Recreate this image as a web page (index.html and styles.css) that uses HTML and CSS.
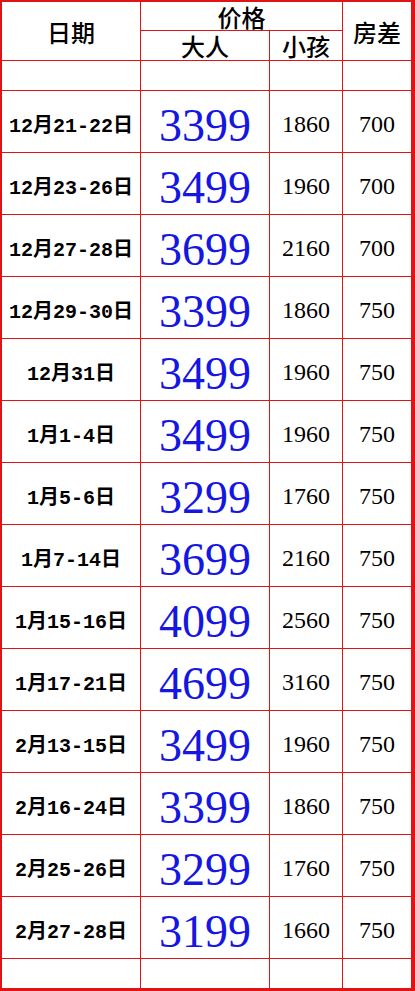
FILE: index.html
```html
<!DOCTYPE html>
<html lang="zh-CN">
<head>
<meta charset="utf-8">
<title>价格表</title>
<link rel="stylesheet" href="styles.css">
</head>
<body>
<div class="sheet">
  <div class="cell head tall">日期</div>
  <div class="cell head wide">价格</div>
  <div class="cell head tall last">房差</div>
  <div class="cell head sub">大人</div>
  <div class="cell head sub">小孩</div>

  <div class="cell"></div><div class="cell"></div><div class="cell"></div><div class="cell last"></div>

  <div class="cell date">12月21-22日</div><div class="cell big">3399</div><div class="cell num">1860</div><div class="cell num last">700</div>
  <div class="cell date">12月23-26日</div><div class="cell big">3499</div><div class="cell num">1960</div><div class="cell num last">700</div>
  <div class="cell date">12月27-28日</div><div class="cell big">3699</div><div class="cell num">2160</div><div class="cell num last">700</div>
  <div class="cell date">12月29-30日</div><div class="cell big">3399</div><div class="cell num">1860</div><div class="cell num last">750</div>
  <div class="cell date">12月31日</div><div class="cell big">3499</div><div class="cell num">1960</div><div class="cell num last">750</div>
  <div class="cell date">1月1-4日</div><div class="cell big">3499</div><div class="cell num">1960</div><div class="cell num last">750</div>
  <div class="cell date">1月5-6日</div><div class="cell big">3299</div><div class="cell num">1760</div><div class="cell num last">750</div>
  <div class="cell date">1月7-14日</div><div class="cell big">3699</div><div class="cell num">2160</div><div class="cell num last">750</div>
  <div class="cell date">1月15-16日</div><div class="cell big">4099</div><div class="cell num">2560</div><div class="cell num last">750</div>
  <div class="cell date">1月17-21日</div><div class="cell big">4699</div><div class="cell num">3160</div><div class="cell num last">750</div>
  <div class="cell date">2月13-15日</div><div class="cell big">3499</div><div class="cell num">1960</div><div class="cell num last">750</div>
  <div class="cell date">2月16-24日</div><div class="cell big">3399</div><div class="cell num">1860</div><div class="cell num last">750</div>
  <div class="cell date">2月25-26日</div><div class="cell big">3299</div><div class="cell num">1760</div><div class="cell num last">750</div>
  <div class="cell date">2月27-28日</div><div class="cell big">3199</div><div class="cell num">1660</div><div class="cell num last">750</div>

  <div class="cell end"></div><div class="cell end"></div><div class="cell end"></div><div class="cell end last"></div>
</div>
</body>
</html>
```
FILE: styles.css
```css
html, body {
  margin: 0;
  padding: 0;
  background: #ffffff;
}

.sheet {
  width: 415px;
  height: 991px;
  box-sizing: border-box;
  display: grid;
  grid-template-columns: 139px 129px 73px 68px;
  grid-template-rows: 29px 30px 30px repeat(14, 62px) 29px;
  border-style: solid;
  border-color: #e01414;
  border-width: 2px 4px 3px 2px;
  background: #ffffff;
  color: #000000;
}

.cell {
  box-sizing: border-box;
  border-right: 1px solid #e01414;
  border-bottom: 1px solid #e01414;
  display: flex;
  align-items: center;
  justify-content: center;
  white-space: nowrap;
}

.cell.last {
  border-right: none;
}

.cell.end {
  border-bottom: none;
}

.head {
  font-family: "Noto Sans CJK SC", sans-serif;
  font-size: 24px;
  font-weight: 500;
  line-height: 26px;
}

.head.tall {
  grid-row: span 2;
  padding-top: 2px;
}

.head.wide {
  grid-column: span 2;
  padding-top: 1px;
}

.head.sub {
  padding-top: 1px;
}

.date {
  font-family: "Liberation Mono", "Noto Sans CJK SC", monospace;
  font-size: 20px;
  font-weight: 700;
  padding-top: 4px;
}

.big {
  font-family: "Liberation Serif", serif;
  font-size: 46px;
  color: #1616e2;
  padding-top: 7px;
}

.num {
  font-family: "Liberation Serif", serif;
  font-size: 24px;
  font-weight: 400;
  padding-top: 6px;
}
```
